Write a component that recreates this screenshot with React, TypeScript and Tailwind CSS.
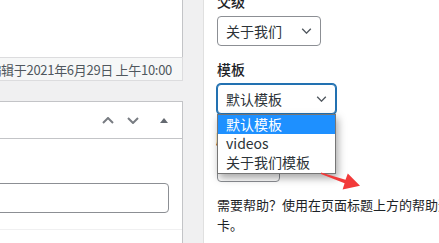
import React from 'react'

const ChevronDown = ({ className = '' }: { className?: string }) => (
  <svg viewBox="0 0 12 7" className={className} fill="none" stroke="currentColor" strokeWidth="1.6">
    <path d="M1 1l5 5 5-5" />
  </svg>
)

const SelectBox = ({ value, width, focused = false }: { value: string, width: string, focused?: boolean }) => (
  <div
    className={
      focused
        ? `relative h-[30px] ${width} rounded-[4px] border border-[#2271b1] shadow-[0_0_0_1px_#2271b1] bg-white flex items-center pl-[8px] pr-[8px]`
        : `relative h-[30px] ${width} rounded-[4px] border border-[#8c8f94] bg-white flex items-center pl-[8px] pr-[8px]`
    }
  >
    <span className="flex-1 text-[14px] text-[#2c3338] leading-none">{value}</span>
    <ChevronDown className="w-[11px] h-[6px] text-[#50575e]" />
  </div>
)

export default function App() {
  return (
    <div className="w-[439px] h-[243px] overflow-hidden bg-[#f0f0f1] flex font-['Noto_Sans_CJK_SC','Noto_Sans',sans-serif] text-[#1d2327]">
      {/* main column */}
      <div className="w-[183px] shrink-0 flex flex-col">
        <div className="bg-white border-r border-[#c3c4c7] h-[57px]" />
        <div className="h-[24px] bg-[#f6f7f7] border-t border-b border-r border-[#dcdcde] flex items-center justify-end pr-[10px] overflow-hidden whitespace-nowrap">
          <span className="text-[13px] text-[#50575e] leading-none tracking-[-0.3px]">编辑于2021年6月29日 上午10:00</span>
        </div>
        <div className="h-[20px]" />
        <div className="flex-1 bg-white border-t border-r border-[#c3c4c7] flex flex-col">
          <div className="h-[37px] border-b border-[#c3c4c7] flex items-center justify-end pr-[14px]">
            <svg viewBox="0 0 12 7" className="w-[12px] h-[7px] text-[#787c82]" fill="none" stroke="currentColor" strokeWidth="2">
              <path d="M1 6l5-5 5 5" />
            </svg>
            <svg viewBox="0 0 12 7" className="w-[12px] h-[7px] ml-[13px] text-[#787c82]" fill="none" stroke="currentColor" strokeWidth="2">
              <path d="M1 1l5 5 5-5" />
            </svg>
            <svg viewBox="0 0 8 5" className="w-[8px] h-[5px] ml-[21px] text-[#646970]" fill="currentColor">
              <path d="M0 5L4 0l4 5z" />
            </svg>
          </div>
          <div className="h-[44px]" />
          <div className="h-[30px] mr-[13px] -ml-[10px] rounded-[4px] border border-[#8c8f94]" />
          <div className="h-[16px]" />
          <div className="border-t border-[#f0f0f1]" />
        </div>
      </div>

      {/* sidebar */}
      <div className="w-[20px] shrink-0" />
      <div className="w-[300px] shrink-0 bg-white border-l border-[#e0e0e0] pl-[13px] relative">
        <div className="-mt-[9px] h-[20px] leading-[20px] text-[14px] font-medium">父级</div>
        <div className="mt-[5px]">
          <SelectBox value="关于我们" width="w-[104px]" />
        </div>
        <div className="mt-[13px] h-[20px] leading-[20px] text-[14px] font-medium">模板</div>
        <div className="mt-[5px] relative">
          <SelectBox value="默认模板" width="w-[119px]" focused />
          <div className="absolute z-10 left-0 top-[30px] w-[119px] bg-white border border-[#767676] shadow-[2px_4px_8px_rgba(0,0,0,0.35)] text-[14px] leading-[19px] pb-[1px]">
            <div className="bg-[#1e90ff] text-white pl-[8px]">默认模板</div>
            <div className="pl-[8px] text-[#2c3338]">videos</div>
            <div className="pl-[8px] text-[#2c3338]">关于我们模板</div>
          </div>
        </div>
        <div className="mt-[14px] h-[20px] leading-[20px] text-[14px] font-medium -ml-[1px]">顺序</div>
        <div className="mt-[4px] h-[30px] w-[63px] rounded-[4px] border border-[#8c8f94]" />
        <p className="mt-[13px] w-[250px] text-[13px] leading-[20px] text-[#1d2327]">
          需要帮助？使用在页面标题上方的帮助选项卡。
        </p>
        <svg viewBox="0 0 40 22" className="absolute z-20 left-[117px] top-[170px] w-[40px] h-[22px]" fill="#f23a3a">
          <path d="M0 2.5 L24.5 9.8 L26.8 3.5 L39 15.8 L21.6 19.6 L23.6 13.3 L0 4 Z" />
        </svg>
      </div>
    </div>
  )
}
